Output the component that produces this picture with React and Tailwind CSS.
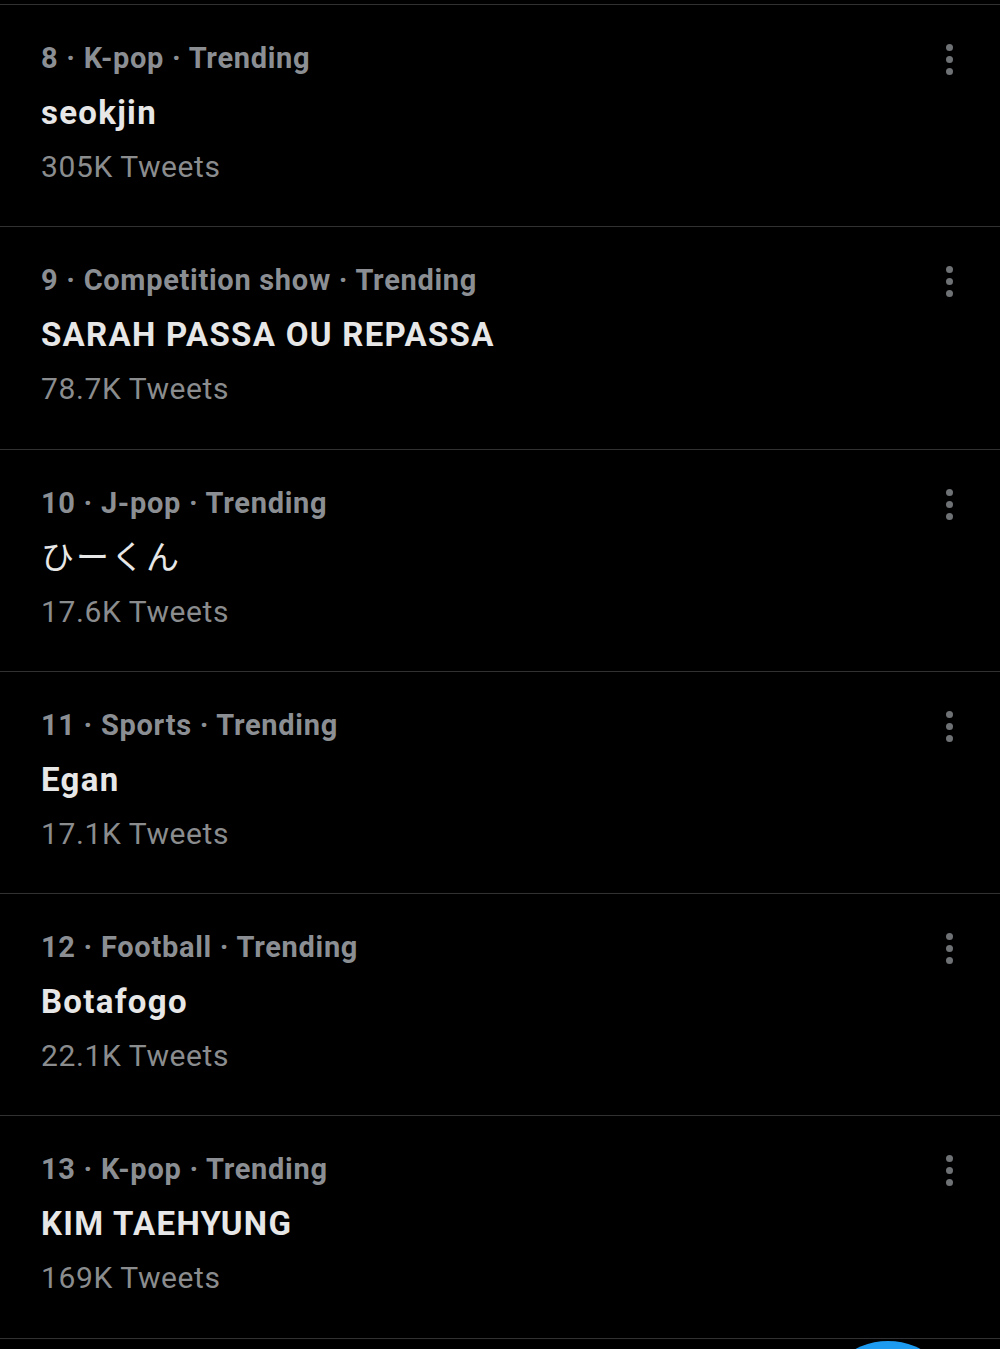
const trends = [
  { rank: 8, category: 'K-pop', title: 'seokjin', count: '305K' },
  { rank: 9, category: 'Competition show', title: 'SARAH PASSA OU REPASSA', count: '78.7K', tall: true },
  { rank: 10, category: 'J-pop', title: 'ひーくん', count: '17.6K', cjk: true },
  { rank: 11, category: 'Sports', title: 'Egan', count: '17.1K' },
  { rank: 12, category: 'Football', title: 'Botafogo', count: '22.1K' },
  { rank: 13, category: 'K-pop', title: 'KIM TAEHYUNG', count: '169K', tall: true },
];

const MoreDots = () => (
  <div className="flex flex-col gap-[5px] mt-[39px]">
    <span className="block w-[7px] h-[7px] rounded-full bg-[#6f7275]" />
    <span className="block w-[7px] h-[7px] rounded-full bg-[#6f7275]" />
    <span className="block w-[7px] h-[7px] rounded-full bg-[#6f7275]" />
  </div>
);

const TrendRow = ({ trend }) => (
  <div
    className={
      trend.tall
        ? 'flex justify-between h-[223px] border-t border-[#2f3133] pl-[41px] pr-[47px]'
        : 'flex justify-between h-[222px] border-t border-[#2f3133] pl-[41px] pr-[47px]'
    }
  >
    <div className="pt-[35px]">
      <div className="text-[29px] leading-[36px] tracking-[0.7px] font-bold text-[#8b8f93]">
        {trend.rank} · {trend.category} · Trending
      </div>
      <div
        className={
          trend.cjk
            ? 'mt-[15px] text-[33px] leading-[44px] tracking-[2px] font-normal text-[#e7e7e7]'
            : 'mt-[15px] text-[33px] leading-[44px] tracking-[1.3px] font-bold text-[#e7e7e7]'
        }
      >
        {trend.title}
      </div>
      <div className="mt-[12px] text-[30px] leading-[40px] tracking-[0.6px] text-[#8a8c8e]">
        {trend.count} Tweets
      </div>
    </div>
    <MoreDots />
  </div>
);

export default function App() {
  return (
    <div
      className="relative w-[1000px] h-[1349px] overflow-hidden bg-black pt-[4px]"
      style={{ fontFamily: 'Roboto, "Noto Sans CJK JP", sans-serif' }}
    >
      {trends.map((t) => (
        <TrendRow key={t.rank} trend={t} />
      ))}
      <div className="border-t border-[#2f3133]" />

      {/* Floating compose button peeking in */}
      <div className="absolute left-[818px] top-[1341px] w-[140px] h-[140px] rounded-full bg-[#1d9bf0]" />
    </div>
  );
}
